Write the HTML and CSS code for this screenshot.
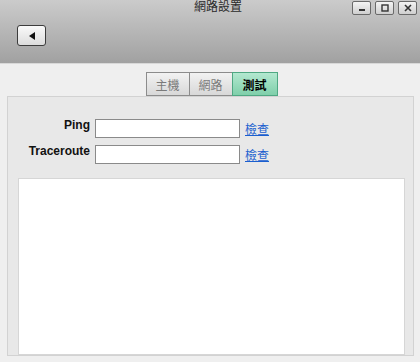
FILE: index.html
```html
<!DOCTYPE html>
<html>
<head>
<meta charset="utf-8">
<link rel="stylesheet" href="styles.css">
</head>
<body>
<div class="header">
  <div class="title">網路設置</div>
  <div class="winbtns">
    <span class="wbtn"><svg width="10" height="8" viewBox="0 0 10 8"><rect x="2" y="5" width="6" height="2" fill="#333"/></svg></span>
    <span class="wbtn"><svg width="10" height="8" viewBox="0 0 10 8"><rect x="2" y="1" width="6" height="6" fill="none" stroke="#333" stroke-width="1.4"/></svg></span>
    <span class="wbtn"><svg width="10" height="8" viewBox="0 0 10 8"><path d="M2 1 L8 7 M8 1 L2 7" stroke="#333" stroke-width="1.6"/></svg></span>
  </div>
  <button class="back"><svg width="10" height="10" viewBox="0 0 10 10"><path d="M2 5 L8 1 L8 9 Z" fill="#111"/></svg></button>
</div>
<div class="main">
  <div class="tabs">
    <span class="tab">主機</span><span class="tab">網路</span><span class="tab active">測試</span>
  </div>
  <div class="panel">
    <div class="form">
      <label class="lbl">Ping</label><input class="inp" type="text"><a class="lnk" href="#">檢查</a>
      <label class="lbl">Traceroute</label><input class="inp" type="text"><a class="lnk" href="#">檢查</a>
    </div>
    <div class="output"></div>
  </div>
</div>
</body>
</html>
```

FILE: styles.css
```css
html, body { margin: 0; padding: 0; }
body {
  width: 420px; height: 362px; overflow: hidden;
  background: #efefef;
  font-family: "Liberation Sans", Arial, "Noto Sans CJK TC", sans-serif;
}
.header {
  position: relative;
  height: 63px;
  background: linear-gradient(#cbcbcb, #a1a1a1);
  border-bottom: 1px solid #d8d8d8;
}
.title {
  text-align: center;
  font-size: 12px;
  color: #2a2a2a;
  line-height: 14px;
  padding-left: 16px;
}
.winbtns {
  position: absolute; top: 1px; right: 3px;
  display: flex; gap: 4px;
}
.wbtn {
  width: 17px; height: 12px;
  border: 1px solid #6a6a6a; border-radius: 2px;
  background: linear-gradient(#f4f4f4, #cfcfcf);
  display: flex; align-items: center; justify-content: center;
}
.back {
  position: absolute; left: 17px; top: 25px;
  width: 29px; height: 21px; padding: 0;
  border: 1px solid #3c3c3c; border-radius: 3px;
  background: linear-gradient(#fafafa, #dcdcdc);
  display: flex; align-items: center; justify-content: center;
}
.main { padding: 8px 6px 0 7px; }
.tabs { display: flex; justify-content: center; margin-left: 3px; }
.tab {
  width: 42px; height: 22px;
  border: 1px solid #8c8c8c; margin-left: -1px;
  background: linear-gradient(#f2f2f2, #d8d8d8);
  color: #7a7a7a; font-size: 12px;
  display: flex; align-items: center; justify-content: center;
}
.tab.active {
  width: 44px;
  background: linear-gradient(#b3e8d0, #7fcfaa);
  border-color: #4fa883; color: #000; font-weight: bold;
}
.panel {
  height: 260px;
  border: 1px solid #d2d2d2;
  background: #e8e8e8;
  padding: 22px 8px 0 10px;
  box-sizing: border-box;
}
.form {
  display: grid;
  grid-template-columns: 72px 145px auto;
  column-gap: 5px; row-gap: 7px;
  align-items: center;
}
.lbl { text-align: right; font-size: 12px; font-weight: bold; color: #111; margin-top: -8px; }
.inp {
  height: 19px; box-sizing: border-box;
  border: 1px solid #8a8a8a; background: #fff; padding: 0;
}
.lnk { font-size: 12px; color: #1a5fcf; text-decoration: underline; }
.output {
  margin-top: 14px;
  height: 175px;
  background: #fff;
  border: 1px solid #d6d6d6;
}
```
